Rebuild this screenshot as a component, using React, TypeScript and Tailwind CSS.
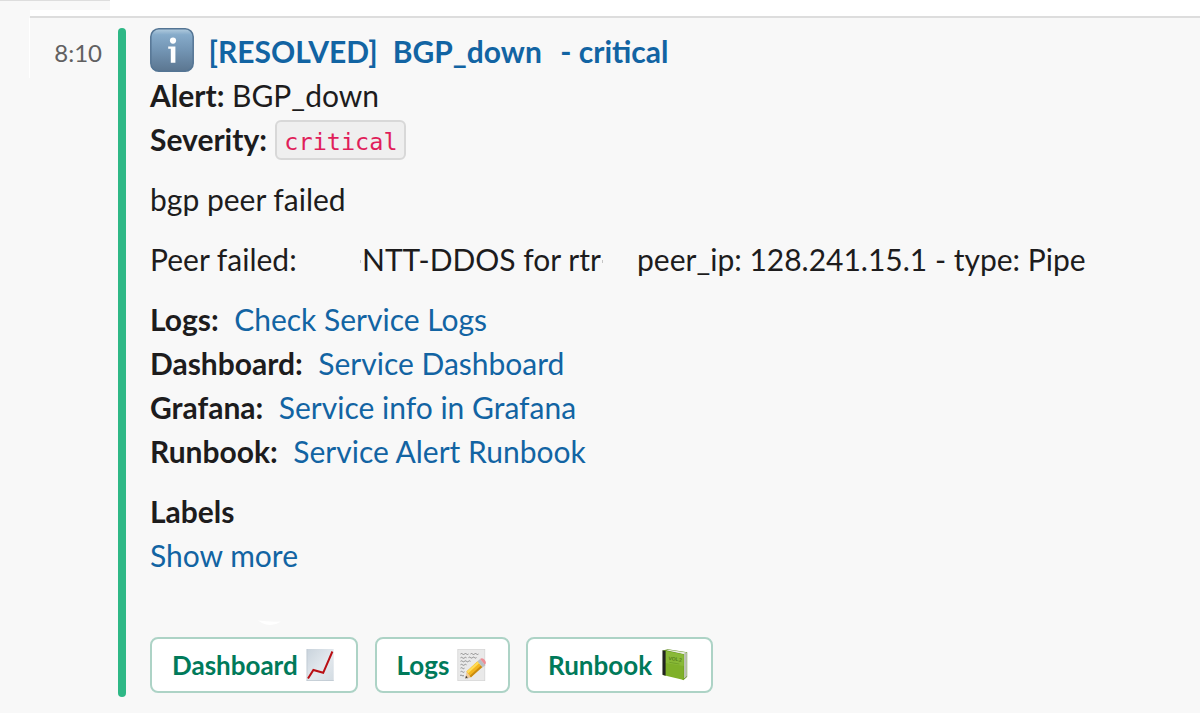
import type { ReactNode } from "react";

function InfoIcon() {
  return (
    <svg className="h-11 w-11 shrink-0" viewBox="0 0 44 44">
      <defs>
        <linearGradient id="info" x1="0" y1="0" x2="0" y2="1">
          <stop offset="0" stopColor="#b4cddf" />
          <stop offset="0.14" stopColor="#86abca" />
          <stop offset="0.5" stopColor="#7395b4" />
          <stop offset="1" stopColor="#5b7690" />
        </linearGradient>
      </defs>
      <rect x="0.8" y="0.8" width="42.4" height="42.4" rx="8" fill="url(#info)" stroke="#547594" strokeWidth="1.5" />
      <circle cx="23" cy="12.6" r="3.1" fill="#fff" />
      <path d="M18.2 18.4h7.2v16.4h-4.6V20.7h-2.6z" fill="#fff" />
    </svg>
  );
}

function ChartIcon() {
  return (
    <svg className="h-8 w-7 shrink-0" viewBox="0 0 28 32">
      <defs>
        <linearGradient id="chart" x1="0" y1="0" x2="1" y2="1">
          <stop offset="0" stopColor="#c9d3dc" />
          <stop offset="0.55" stopColor="#e3e9ee" />
          <stop offset="1" stopColor="#d3dbe2" />
        </linearGradient>
      </defs>
      <rect x="0.7" width="27" height="32" fill="url(#chart)" />
      <path d="M0.7 31.5h27M1 0v32" stroke="#bcc6cf" strokeWidth="0.7" />
      <path d="M2 29.5L7.4 21l9.8 2.8L26.4 2.5" fill="none" stroke="#b90f14" strokeWidth="2" />
    </svg>
  );
}

function MemoIcon() {
  return (
    <svg className="h-8 w-[30px] shrink-0" viewBox="0 0 30 32">
      <rect x="0.8" y="0.3" width="27" height="31.4" fill="#e9e9e9" stroke="#d2d2d2" strokeWidth="0.7" />
      <path
        d="M3.5 5q1-1 2 0t2 0t2 0t2 0M13.5 5q1-1 2 0t2 0t2 0t2 0M3.5 8.8q1-1 2 0t2 0t2 0M11.5 8.6q1-1 2 0t2 0t2 0t2 0M3.5 12.3q1-1 2 0t2 0t2 0t2 0t2 0M3.5 15.8q1-1 2 0t2 0t2 0M3.5 19.2q1-1 2 0t2 0M3.5 22.8q1-1 2 0t2 0M3 26.5q1-1 2 0t2 0"
        fill="none"
        stroke="#777"
        strokeWidth="0.8"
      />
      <path d="M9.5 29.5L28 15.5" stroke="#aaa" strokeWidth="1.6" opacity="0.6" />
      <path d="M8.3 29.5L9.6 22.6L14.4 28.2z" fill="#edc99b" />
      <path d="M8.3 29.5l0.7-2.7l1.7 1.8z" fill="#333" />
      <path d="M9.4 22.6L20.5 12.2L25.2 18L14 28.2z" fill="#f3b51e" />
      <path d="M9.8 22.6L20.7 12.4L22.2 14.2L11.2 24.2z" fill="#ffdc57" />
      <path d="M12.6 27L24 16.5L25.2 18L14 28.2z" fill="#c98a10" />
      <path d="M20.5 12.2l2.6-2.2l4.7 5.7L25.2 18z" fill="#b9bec2" />
      <path d="M23.1 10Q25.4 8.1 27.8 11Q30 14 27.8 15.7z" fill="#ee8c95" />
    </svg>
  );
}

function BookIcon() {
  return (
    <svg className="ml-0.5 h-8 w-[26px] shrink-0" viewBox="0 0 26 32">
      <path d="M1.5 1.2L6 0.3L25.2 3.2V27.8L21.3 31.3L20 30z" fill="#5b8a16" />
      <path d="M4 1.2L6.5 0.7L24.4 3.4L22 5.2z" fill="#e9ecdf" />
      <path d="M22.2 5L24.7 3.6V27.2L22.2 29.4z" fill="#d9d9d9" />
      <path d="M23.4 4.4V28" stroke="#999" strokeWidth="0.5" />
      <path d="M0.8 1.3L21.8 5.4V31L0.8 26z" fill="#7fb029" />
      <path d="M3.2 1.8L21.8 5.4V17L3.2 14z" fill="#8dbd3d" opacity="0.7" />
      <path d="M0.5 1.2L3.6 1.9V26.7L0.5 25.8z" fill="#222" />
      <text x="6.2" y="11" className="text-[4.8px] font-bold" fontFamily="Lato" fill="#527b18" transform="rotate(8 7 11)">
        VOL.2
      </text>
      <path d="M7.3 13.3l10 1.7" stroke="#699622" strokeWidth="0.7" />
    </svg>
  );
}

function LinkRow({ label, gap, children }: { label: string; gap: string; children: ReactNode }) {
  return (
    <div className="flex">
      <b>{label}</b>
      <a className={`text-[#1264a3] ${gap}`}>{children}</a>
    </div>
  );
}

function ActionButton({ label, width, children }: { label: string; width: string; children: ReactNode }) {
  return (
    <button
      className={`flex h-14 items-center gap-2 rounded-lg border-2 border-[#add3c6] bg-white pl-5 text-[26px] font-bold text-[#007a5a] ${width}`}
    >
      <span>{label}</span>
      {children}
    </button>
  );
}

export default function App() {
  return (
    <div className="h-[716px] w-[1200px] overflow-hidden bg-white font-['Lato',sans-serif] text-[30px] leading-[44px] text-[#1d1c1d]">
      <div className="relative flex h-[713px] flex-col bg-[#f8f8f8]">
        <div className="flex h-[18px] shrink-0">
          <div className="h-full w-[30px] border-t border-[#dddddd]" />
          <div className="flex flex-1 flex-col">
            <div className="flex h-2.5">
              <div className="w-20 border-t border-[#dddddd]" />
              <div className="flex-1 bg-white" />
            </div>
            <div className="h-1.5 bg-white" />
            <div className="h-0.5 bg-[#dddddd]" />
          </div>
        </div>

        <div className="flex">
          <div className="w-[118px] shrink-0 pr-4 pt-[13px] text-right text-[24px] text-[#616061]">8:10</div>
          <div className="mt-[10px] h-[669px] w-2 shrink-0 rounded-full bg-[#2eb886]" />
          <div className="ml-6 flex flex-col whitespace-pre pt-[10px]">
            <div className="flex h-[45px] font-bold text-[#1264a3]">
              <InfoIcon />
              <span className="ml-[14.5px] pt-px">[RESOLVED]</span>
              <span className="ml-[15px] pt-px">BGP_down</span>
              <span className="ml-[18.5px] pt-px">- critical</span>
            </div>
            <div>
              <b>Alert:</b> BGP_down
            </div>
            <div className="flex">
              <b>Severity:</b>
              <code className="ml-[8.5px] mt-[3px] flex h-10 w-[131px] items-center justify-center rounded-md border-2 border-[#d8d8d8] bg-[#efefef] pt-[3px] font-['DejaVu_Sans_Mono',monospace] text-[23.5px] text-[#e01e5a]">
                critical
              </code>
            </div>
            <div className="mt-4">bgp peer failed</div>
            <div className="mt-4 flex">
              <span className="w-[212px]">Peer failed:</span>
              <span className="w-[275px]">NTT-DDOS for rtr</span>
              <span>peer_ip: 128.241.15.1 - type: Pipe</span>
            </div>
            <div className="mt-4">
              <LinkRow label="Logs:" gap="ml-[15.5px]">Check Service Logs</LinkRow>
              <LinkRow label="Dashboard:" gap="ml-[15.5px]">Service Dashboard</LinkRow>
              <LinkRow label="Grafana:" gap="ml-[15.5px]">Service info in Grafana</LinkRow>
              <LinkRow label="Runbook:" gap="ml-[15.5px]">Service Alert Runbook</LinkRow>
            </div>
            <b className="mt-4">Labels</b>
            <a className="text-[#1264a3]">Show more</a>
            <div className="mt-[60px] flex gap-[16.5px]">
              <ActionButton label="Dashboard" width="w-52"><ChartIcon /></ActionButton>
              <ActionButton label="Logs" width="w-[135px]"><MemoIcon /></ActionButton>
              <ActionButton label="Runbook" width="w-[187px]"><BookIcon /></ActionButton>
            </div>
          </div>
        </div>
        <svg className="absolute left-[256px] top-[619px] h-2 w-7" viewBox="0 0 28 8">
          <path d="M2 1.5Q13 3 25 2.5Q14 10 2 1.5z" fill="#fff" />
        </svg>
        <div className="absolute left-[29px] top-[18px] h-[60px] w-px bg-white" />
        <div className="absolute left-[360px] top-[260px] h-[3px] w-px bg-[#c4c4c4]" />
        <div className="absolute left-[602px] top-[260px] h-[3px] w-px bg-[#c4c4c4]" />
      </div>
    </div>
  );
}
